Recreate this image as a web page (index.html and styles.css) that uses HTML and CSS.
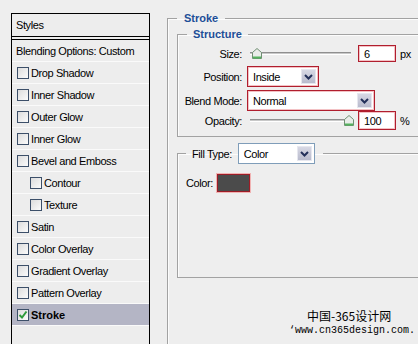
FILE: index.html
```html
<!DOCTYPE html>
<html lang="en">
<head>
    <meta charset="UTF-8">
    <title>Layer Style - Stroke</title>
    <link rel="stylesheet" href="styles.css">
</head>
<body>
    <div class="dialog">
        <div class="styles-panel">
            <div class="panel-head">Styles</div>
            <ul class="style-list">
                <li class="blend">Blending Options: Custom</li>
                <li><span class="check"></span>Drop Shadow</li>
                <li><span class="check"></span>Inner Shadow</li>
                <li><span class="check"></span>Outer Glow</li>
                <li><span class="check"></span>Inner Glow</li>
                <li><span class="check"></span>Bevel and Emboss</li>
                <li class="sub"><span class="check"></span>Contour</li>
                <li class="sub"><span class="check"></span>Texture</li>
                <li><span class="check"></span>Satin</li>
                <li><span class="check"></span>Color Overlay</li>
                <li><span class="check"></span>Gradient Overlay</li>
                <li><span class="check"></span>Pattern Overlay</li>
                <li class="selected">
                    <span class="check">
                        <svg width="10" height="10" viewBox="0 0 10 10"><polyline points="1.5,5 4,7.5 8.5,1.5" fill="none" stroke="#2e9a3a" stroke-width="2"/></svg>
                    </span>Stroke
                </li>
            </ul>
        </div>

        <div class="settings">
            <fieldset class="group outer">
                <legend class="title">Stroke</legend>

                <fieldset class="group structure">
                    <legend class="title">Structure</legend>

                    <div class="row size-row">
                        <label>Size:</label>
                        <div class="slider">
                            <span class="track"></span>
                            <svg class="thumb" style="left: 2px" width="10" height="11" viewBox="0 0 10 11"><path d="M0.5 4.5 L5 0.5 L9.5 4.5 V10.5 H0.5 Z" fill="#e9ece9" stroke="#6f8f72"/><rect x="1" y="8.5" width="8" height="2" fill="#55b25e"/></svg>
                        </div>
                        <span class="field">6</span>
                        <span class="unit">px</span>
                    </div>

                    <div class="row pos-row">
                        <label>Position:</label>
                        <span class="select red pos">Inside<span class="drop"><svg width="9" height="6" viewBox="0 0 9 6"><polyline points="1,1 4.5,4.5 8,1" fill="none" stroke="#23305a" stroke-width="2"/></svg></span></span>
                    </div>

                    <div class="row blend-row">
                        <label>Blend Mode:</label>
                        <span class="select red mode">Normal<span class="drop"><svg width="9" height="6" viewBox="0 0 9 6"><polyline points="1,1 4.5,4.5 8,1" fill="none" stroke="#23305a" stroke-width="2"/></svg></span></span>
                    </div>

                    <div class="row opacity-row">
                        <label>Opacity:</label>
                        <div class="slider">
                            <span class="track"></span>
                            <svg class="thumb" style="left: 94px" width="10" height="11" viewBox="0 0 10 11"><path d="M0.5 4.5 L5 0.5 L9.5 4.5 V10.5 H0.5 Z" fill="#e9ece9" stroke="#6f8f72"/><rect x="1" y="8.5" width="8" height="2" fill="#55b25e"/></svg>
                        </div>
                        <span class="field">100</span>
                        <span class="unit">%</span>
                    </div>
                </fieldset>

                <fieldset class="group fill">
                    <legend class="fill-legend">
                        <span>Fill Type:</span>
                        <span class="select plain">Color<span class="drop"><svg width="9" height="6" viewBox="0 0 9 6"><polyline points="1,1 4.5,4.5 8,1" fill="none" stroke="#23305a" stroke-width="2"/></svg></span></span>
                    </legend>
                    <div class="color-row">
                        <span>Color:</span>
                        <span class="swatch"></span>
                    </div>
                </fieldset>
            </fieldset>
        </div>
    </div>

    <div class="watermark">
        <div class="cn">中国-365设计网</div>
        <div class="url">‘www.cn365design.com.</div>
    </div>
</body>
</html>
```

FILE: styles.css
```css
html, body {
    height: 344px;
    overflow: hidden;
}
body {
    margin: 0;
    background: #eeeeee;
    font-family: "Liberation Sans", Arial, sans-serif;
    font-size: 11px;
    letter-spacing: -0.4px;
    color: #000;
}
.dialog {
    display: flex;
    align-items: flex-start;
    width: 640px;
}

/* left list of styles */
.styles-panel {
    flex-shrink: 0;
    width: 139px;
    height: 340px;
    margin: 13px 0 0 11px;
    box-sizing: border-box;
    border: 1px solid #000;
    border-bottom: none;
    background: #ededed;
}
.panel-head {
    height: 22px;
    line-height: 22px;
    padding-left: 4px;
    border-bottom: 1px solid #000;
    margin-bottom: 2px;
}
.style-list {
    list-style: none;
    margin: 0;
    padding: 0;
    border-top: 1px solid #000;
}
.style-list li {
    display: flex;
    align-items: center;
    height: 21px;
    padding-left: 5px;
    border-bottom: 1px solid #fafafa;
}
.style-list li.blend {
    padding-left: 4px;
}
.style-list li.sub {
    padding-left: 18px;
}
.style-list li.selected {
    background: #b4b5c5;
    font-weight: bold;
    letter-spacing: 0;
}
.check {
    display: flex;
    align-items: center;
    justify-content: center;
    width: 12px;
    height: 12px;
    box-sizing: border-box;
    margin-right: 2px;
    border: 1px solid #3c4f69;
    background: linear-gradient(135deg, #dcdcdc, #fbfbfb);
}

/* right settings */
.settings {
    flex-shrink: 0;
    margin: 11px 0 0 17px;
}
.group {
    margin: 0;
    min-width: 0;
    border: 1px solid #a2a2a2;
    box-shadow: inset 1px 1px 0 #fcfcfc;
}
.title {
    padding: 0 7px;
    line-height: 14px;
    font-weight: bold;
    letter-spacing: 0;
    color: #1d4e98;
}
.outer {
    width: 320px;
    height: 400px;
    padding: 2px 0 0 9px;
}
.structure {
    width: 300px;
    padding: 4px 0 6px 4px;
}
.structure .title {
    margin-left: 5px;
    padding: 0 6px;
}
.row {
    display: flex;
    align-items: center;
}
.row label {
    width: 60px;
    text-align: right;
    white-space: nowrap;
    margin-right: 5px;
    flex-shrink: 0;
}
.size-row {
    height: 17px;
}
.pos-row {
    height: 21px;
    margin-top: 4px;
}
.blend-row {
    height: 21px;
    margin-top: 3px;
}
.opacity-row {
    height: 19px;
}

.slider {
    position: relative;
    width: 101px;
    height: 17px;
    margin-left: 3px;
}
.track {
    position: absolute;
    left: 0;
    right: 0;
    top: 7px;
    height: 1px;
    background: #c8c8c8;
    border-top: 1px solid #8f8f8f;
    border-bottom: 1px solid #ffffff;
}
.thumb {
    position: absolute;
    top: 3px;
}
.field {
    width: 38px;
    height: 100%;
    box-sizing: border-box;
    margin-left: 7px;
    padding-left: 5px;
    display: flex;
    align-items: center;
    background: #fff;
    border: 1px solid #b01e2e;
    box-shadow: inset 0 0 0 1px #f3c2c5;
}
.unit {
    margin-left: 4px;
}

.select {
    display: flex;
    align-items: center;
    justify-content: space-between;
    height: 21px;
    box-sizing: border-box;
    padding: 2px 2px 2px 5px;
    background: #fff;
    font-size: 11px;
    font-weight: normal;
    color: #000;
}
.select.red {
    border: 1px solid #b01e2e;
    box-shadow: inset 0 0 0 1px #f3c2c5;
}
.select.plain {
    border: 1px solid #7f9db9;
}
.pos {
    width: 72px;
}
.mode {
    width: 128px;
}
.drop {
    display: flex;
    align-items: center;
    justify-content: center;
    width: 15px;
    height: 100%;
    box-sizing: border-box;
    border: 1px solid #e6e7ef;
    background: linear-gradient(#d7d8e4, #b9bbcd);
}

.fill {
    width: 300px;
    margin-top: 6px;
    padding: 0 0 85px 8px;
}
.fill-legend {
    display: flex;
    align-items: center;
    padding: 0 8px 0 6px;
}
.fill-legend .select {
    width: 77px;
    margin-left: 6px;
}
.color-row {
    display: flex;
    align-items: center;
    height: 18px;
    margin-top: 10px;
}
.swatch {
    width: 33px;
    height: 18px;
    box-sizing: border-box;
    margin-left: 4px;
    background: #4b4b4b;
    border: 1px solid #9c1c26;
    box-shadow: 0 0 0 1px #f1b3b3;
}

/* watermark printed over the dialog */
.watermark {
    position: absolute;
    left: 289px;
    top: 308px;
    color: #000;
    letter-spacing: 0;
}
.cn {
    margin-left: 18px;
    font-family: "Noto Sans CJK SC", sans-serif;
    font-size: 12px;
    line-height: 16px;
}
.url {
    font-family: "Liberation Mono", monospace;
    font-size: 10px;
    line-height: 14px;
}
```
